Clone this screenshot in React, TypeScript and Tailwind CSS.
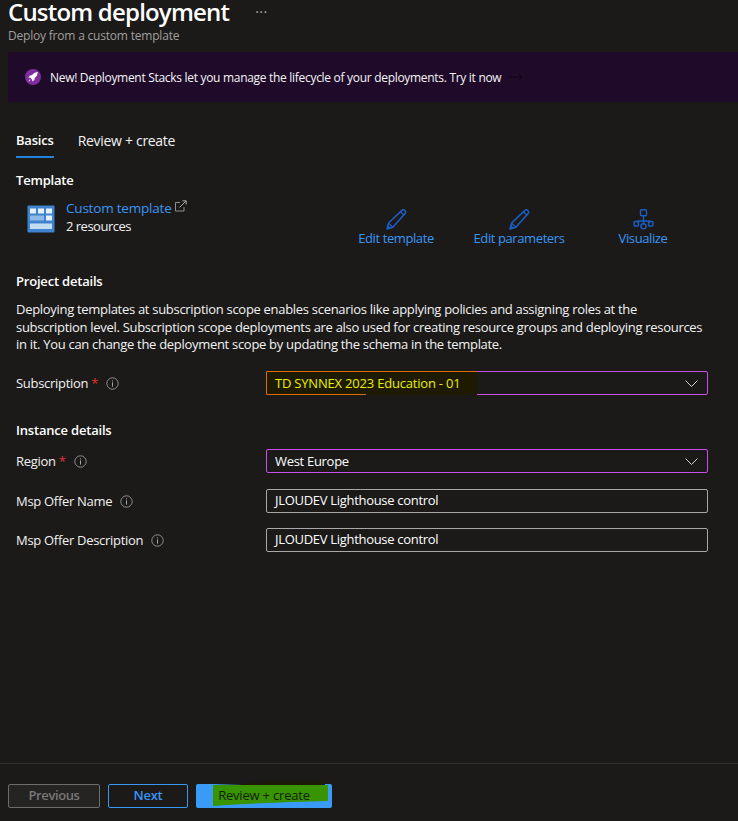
const Info = () => (
  <svg width="13" height="13" viewBox="0 0 13 13" fill="none" className="shrink-0">
    <circle cx="6.5" cy="6.5" r="5.7" stroke="#8f8f8f" />
    <rect x="6" y="5.4" width="1" height="4.2" fill="#a8a8a8" />
    <rect x="6" y="3.4" width="1" height="1" fill="#a8a8a8" />
  </svg>
);

const Chevron = () => (
  <svg width="13" height="7" viewBox="0 0 13 7" fill="none" className="shrink-0">
    <path d="M0.5 0.5L6.500 6.500L12.500 0.500" stroke="#d0d0d0" />
  </svg>
);

const Pencil = () => (
  <svg width="21" height="21" viewBox="0 0 21 21" fill="none">
    <path d="M1 20l1.6-6L15.6 1.6c1-1 2.4-1 3.3 0 .9.9.9 2.2 0 3.2L6.800 18.300z" stroke="#1b5fc4" strokeWidth="1.500" strokeLinejoin="round" />
    <path d="M2.600 14.200l4.200 4.100M14.500 2.800l3.800 3.700" stroke="#1b5fc4" strokeWidth="1.200" />
    <path d="M1 20l1-3.800 2.800 2.700z" fill="#1b5fc4" />
  </svg>
);

const Hierarchy = () => (
  <svg width="21" height="21" viewBox="0 0 21 21" fill="none" stroke="#1b5fc4" strokeWidth="1.400">
    <rect x="7.500" y="0.800" width="6" height="6" rx="1" />
    <path d="M10.500 6.800v8M5 14v-2h11v2" />
    <rect x="1" y="12.500" width="4.500" height="4.500" rx="1" />
    <rect x="15.500" y="12.500" width="4.500" height="4.500" rx="1" />
    <circle cx="10.500" cy="17.300" r="2.600" />
  </svg>
);

const TemplateIcon = () => (
  <svg width="28" height="28" viewBox="0 0 28 28">
    <rect x="0.500" y="0.500" width="27" height="27" rx="1" fill="#3f83cf" />
    <rect x="3" y="3.500" width="6" height="5" fill="#e4f0fb" />
    <rect x="11" y="3.500" width="6" height="5" fill="#e4f0fb" />
    <rect x="19" y="3.500" width="6" height="5" fill="#e4f0fb" />
    <rect x="3" y="10.500" width="14" height="5" fill="#8db9e6" />
    <rect x="19" y="10.500" width="6" height="5" fill="#e4f0fb" />
    <rect x="3" y="18.500" width="22" height="5.500" fill="#c3dcf4" />
  </svg>
);

const Rocket = () => (
  <svg width="16" height="16" viewBox="0 0 16 16" className="shrink-0">
    <circle cx="8" cy="8" r="8" fill="#7f2e9e" />
    <path d="M12.800 3c-2.500.2-4.500 1.300-6 3.300L5 6.500 3.300 8.600l2 .2 1.800 1.800.2 2 2.100-1.700.2-1.800c2-1.500 3-3.500 3.200-6.100z" fill="#fff" />
    <path d="M4.800 10.200l-1.600 2.500 2.500-1.600z" fill="#fff" />
  </svg>
);

const External = () => (
  <svg width="12" height="12" viewBox="0 0 12 12" fill="none" stroke="#8f8f8f" className="shrink-0 mt-px">
    <path d="M5 2.500H.5v8.500h8.500V7" />
    <path d="M4.500 7.500L11 1M7.500.8h3.700v3.700" stroke="#a9a9a9" />
  </svg>
);

function ActionLink({ icon, label, className }: { icon: React.ReactNode; label: string; className: string }) {
  return (
    <div className={`flex flex-col items-center ${className}`}>
      {icon}
      <span className="text-[#3a96f5] leading-[18px] -mt-px tracking-[-0.4px]">{label}</span>
    </div>
  );
}

function Field({ label, required, children, className }: { label: string; required?: boolean; children: React.ReactNode; className?: string }) {
  return (
    <div className={`flex items-center ${className ?? ""}`}>
      <div className="w-[250px] shrink-0 flex items-center gap-2 text-[#f2f2f2] pt-0.5">
        <span>
          {label}
          {required && <span className="text-[#e0342c] ml-[3px]">*</span>}
        </span>
        <Info />
      </div>
      {children}
    </div>
  );
}

export default function App() {
  return (
    <div
      className="h-[821px] w-[738px] overflow-hidden flex flex-col bg-[#1b1a19] text-white text-[13px] tracking-[-0.3px]"
      style={{ fontFamily: '"Open Sans", "Noto Sans", sans-serif' }}
    >
      <div className="flex-1 min-h-0">
        <div className="pl-2 h-[52px]">
          <div className="flex items-center h-6">
            <h1 className="text-[24px] font-semibold tracking-[-0.8px] leading-6">Custom deployment</h1>
            <span className="ml-[26px] text-[#a8a8a8] text-[14px] leading-none tracking-[0.5px]">···</span>
          </div>
          <p className="text-[12px] text-[#a19f9d] leading-4 mt-1 tracking-[-0.2px]">Deploy from a custom template</p>
        </div>

        <div className="ml-2 h-[50px] bg-[#1f0a2a] flex items-center pl-[17px] gap-[9px]">
          <Rocket />
          <span className="text-[12px] text-[#f5f5f5] pt-0.5">New! Deployment Stacks let you manage the lifecycle of your deployments. Try it now</span>
          <svg width="14" height="8" viewBox="0 0 14 8" fill="none" stroke="#0e0616" className="-ml-px">
            <path d="M0 4h13M10 1l3 3-3 3" />
          </svg>
        </div>

        <div className="px-4 mt-[29px] flex gap-6 h-[27px]">
          <div className="border-b-2 border-[#2382dc] font-semibold tracking-[-0.2px]">Basics</div>
          <div className="text-[#f2f2f2] text-[14px] tracking-[-0.3px] leading-[19px]">Review + create</div>
        </div>

        <h2 className="px-4 mt-[13px] font-semibold leading-[18px] tracking-[-0.2px]">Template</h2>

        <div className="relative h-[62px] mt-[10px]">
          <div className="flex items-start pl-[27px]">
            <div className="mt-[6px]"><TemplateIcon /></div>
            <div className="ml-[11px] leading-[18px]">
              <div className="flex items-start gap-[3px] text-[#3a96f5] text-[13.500px] tracking-[-0.2px]">
                Custom template <External />
              </div>
              <div className="text-[#f2f2f2] tracking-[-0.5px]">2 resources</div>
            </div>
          </div>
          <div className="absolute left-0 top-[10px] flex">
            <ActionLink icon={<Pencil />} label="Edit template" className="absolute left-[346px] w-[100px]" />
            <ActionLink icon={<Pencil />} label="Edit parameters" className="absolute left-[459px] w-[120px]" />
            <ActionLink icon={<Hierarchy />} label="Visualize" className="absolute left-[593px] w-[100px]" />
          </div>
        </div>

        <h2 className="px-4 mt-[11px] font-semibold leading-[18px] tracking-[-0.2px]">Project details</h2>
        <p className="pl-4 pr-8 mt-[10px] leading-[17.500px] text-[#f2f2f2] pt-px">
          Deploying templates at subscription scope enables scenarios like applying policies and assigning roles at the subscription level. Subscription scope deployments are also used for creating resource groups and deploying resources in it. You can change the deployment scope by updating the schema in the template.
        </p>

        <div className="pl-4 pr-[30px]">
          <Field label="Subscription" required className="mt-[17px]">
            <div className="relative flex-1 h-6 border border-[#c850e8] rounded-[2px] flex items-center justify-between pl-2 pr-[9px] pt-0.5 tracking-[-0.2px]">
              <div className="absolute -left-px -top-px h-6 w-[211px] bg-[#1e1a00] border-t border-[#d96f00] rounded-l-[2px]" />
              <div className="absolute -left-px -top-px h-6 w-[100px] border-l border-b border-[#d96f00] rounded-l-[2px]" />
              <span className="relative text-[#eaf000]">TD SYNNEX 2023 Education - 01</span>
              <Chevron />
            </div>
          </Field>

          <h2 className="mt-[26px] font-semibold leading-[18px] tracking-[-0.2px]">Instance details</h2>

          <Field label="Region" required className="mt-[10px]">
            <div className="flex-1 h-6 border border-[#c850e8] rounded-[2px] flex items-center justify-between pl-2 pr-[9px] pt-0.5">
              <span>West Europe</span>
              <Chevron />
            </div>
          </Field>

          <Field label="Msp Offer Name" className="mt-4">
            <div className="flex-1 h-6 border border-[#a8a8a8] rounded-[2px] flex items-center pl-2">JLOUDEV Lighthouse control</div>
          </Field>

          <Field label="Msp Offer Description" className="mt-[15px]">
            <div className="flex-1 h-6 border border-[#a8a8a8] rounded-[2px] flex items-center pl-2">JLOUDEV Lighthouse control</div>
          </Field>
        </div>
      </div>

      <div className="h-[58px] border-t border-[#323130] pl-2 pt-5 flex items-start gap-2">
        <button className="w-[92px] h-6 bg-[#252423] border border-[#6e6d6c] rounded-[2px] font-semibold text-[#797775] tracking-[-0.4px]">Previous</button>
        <button className="w-20 h-6 border border-[#3a96f5] rounded-[2px] font-semibold text-[#3a96f5]">Next</button>
        <button className="relative w-[136px] h-6 bg-[#3a9bf7] rounded-[2px] text-[#142008] tracking-[-0.2px]">
          <svg width="116" height="28" viewBox="0 0 116 28" className="absolute left-[17px] -top-[4px]">
            <path d="M1 5L30 4 60 1 112 1 112 6 1 6z" fill="#1d1a08" />
            <path d="M0 5H115V21C80 22 40 23 0 26z" fill="#389400" />
          </svg>
          <span className="relative">Review + create</span>
        </button>
      </div>
    </div>
  );
}
